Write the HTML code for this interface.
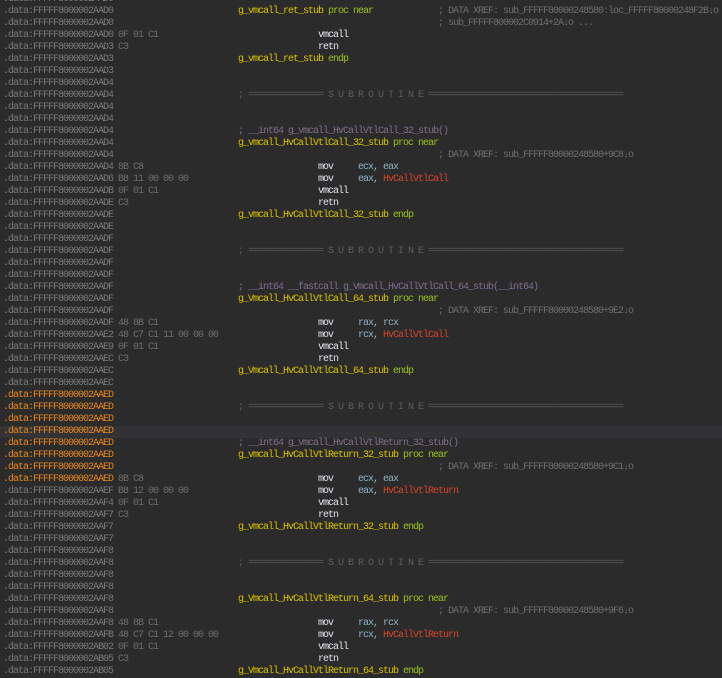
<!DOCTYPE html>
<html><head><meta charset="utf-8"><style>
html,body{margin:0;padding:0;background:#2b2b2b;width:722px;height:672px;overflow:hidden}
#w{position:absolute;top:-6px;left:0;width:722px}
.r{position:relative;height:12px;line-height:12px;font-family:"Liberation Mono",monospace;font-size:10px;letter-spacing:-1px;white-space:pre;color:#7c7c7c}
.r span{position:absolute;top:0}
.hl{background:#333335}
.a{left:3px;color:#7a7a7a}
.or .a{color:#e8871e}
.b{left:118px;color:#6e6e6e}
.l{left:238px;color:#d8c400}
.l i{font-style:normal;color:#98c31a}
.m{left:318px;color:#e4e6ee}
.o{left:358px;color:#8fb2c4}
.o i{font-style:normal;color:#d8452a}
.c{left:438px;color:#6f6f6f}
.s{left:238px;color:#5e5e62}
.f{left:238px;color:#7f6f8f}
</style></head><body><div id="w">
<div class="r"><span class="a">.data:FFFFF8000002AAD0</span></div>
<div class="r"><span class="a">.data:FFFFF8000002AAD0</span><span class="l">g_vmcall_ret_stub <i>proc near</i></span><span class="c">; DATA XREF: sub_FFFFF80000248580:loc_FFFFF80000248F2B↓o</span></div>
<div class="r"><span class="a">.data:FFFFF8000002AAD0</span><span class="c">; sub_FFFFF800002C0914+2A↓o ...</span></div>
<div class="r"><span class="a">.data:FFFFF8000002AAD0</span><span class="b">0F 01 C1</span><span class="m">vmcall</span></div>
<div class="r"><span class="a">.data:FFFFF8000002AAD3</span><span class="b">C3</span><span class="m">retn</span></div>
<div class="r"><span class="a">.data:FFFFF8000002AAD3</span><span class="l">g_vmcall_ret_stub <i>endp</i></span></div>
<div class="r"><span class="a">.data:FFFFF8000002AAD3</span></div>
<div class="r"><span class="a">.data:FFFFF8000002AAD4</span></div>
<div class="r"><span class="a">.data:FFFFF8000002AAD4</span><span class="s">; =============== S U B R O U T I N E =======================================</span></div>
<div class="r"><span class="a">.data:FFFFF8000002AAD4</span></div>
<div class="r"><span class="a">.data:FFFFF8000002AAD4</span></div>
<div class="r"><span class="a">.data:FFFFF8000002AAD4</span><span class="f">; __int64 g_vmcall_HvCallVtlCall_32_stub()</span></div>
<div class="r"><span class="a">.data:FFFFF8000002AAD4</span><span class="l">g_vmcall_HvCallVtlCall_32_stub <i>proc near</i></span></div>
<div class="r"><span class="a">.data:FFFFF8000002AAD4</span><span class="c">; DATA XREF: sub_FFFFF80000248580+9C8↓o</span></div>
<div class="r"><span class="a">.data:FFFFF8000002AAD4</span><span class="b">8B C8</span><span class="m">mov</span><span class="o">ecx, eax</span></div>
<div class="r"><span class="a">.data:FFFFF8000002AAD6</span><span class="b">B8 11 00 00 00</span><span class="m">mov</span><span class="o">eax, <i>HvCallVtlCall</i></span></div>
<div class="r"><span class="a">.data:FFFFF8000002AADB</span><span class="b">0F 01 C1</span><span class="m">vmcall</span></div>
<div class="r"><span class="a">.data:FFFFF8000002AADE</span><span class="b">C3</span><span class="m">retn</span></div>
<div class="r"><span class="a">.data:FFFFF8000002AADE</span><span class="l">g_vmcall_HvCallVtlCall_32_stub <i>endp</i></span></div>
<div class="r"><span class="a">.data:FFFFF8000002AADE</span></div>
<div class="r"><span class="a">.data:FFFFF8000002AADF</span></div>
<div class="r"><span class="a">.data:FFFFF8000002AADF</span><span class="s">; =============== S U B R O U T I N E =======================================</span></div>
<div class="r"><span class="a">.data:FFFFF8000002AADF</span></div>
<div class="r"><span class="a">.data:FFFFF8000002AADF</span></div>
<div class="r"><span class="a">.data:FFFFF8000002AADF</span><span class="f">; __int64 __fastcall g_Vmcall_HvCallVtlCall_64_stub(__int64)</span></div>
<div class="r"><span class="a">.data:FFFFF8000002AADF</span><span class="l">g_Vmcall_HvCallVtlCall_64_stub <i>proc near</i></span></div>
<div class="r"><span class="a">.data:FFFFF8000002AADF</span><span class="c">; DATA XREF: sub_FFFFF80000248580+9E2↓o</span></div>
<div class="r"><span class="a">.data:FFFFF8000002AADF</span><span class="b">48 8B C1</span><span class="m">mov</span><span class="o">rax, rcx</span></div>
<div class="r"><span class="a">.data:FFFFF8000002AAE2</span><span class="b">48 C7 C1 11 00 00 00</span><span class="m">mov</span><span class="o">rcx, <i>HvCallVtlCall</i></span></div>
<div class="r"><span class="a">.data:FFFFF8000002AAE9</span><span class="b">0F 01 C1</span><span class="m">vmcall</span></div>
<div class="r"><span class="a">.data:FFFFF8000002AAEC</span><span class="b">C3</span><span class="m">retn</span></div>
<div class="r"><span class="a">.data:FFFFF8000002AAEC</span><span class="l">g_Vmcall_HvCallVtlCall_64_stub <i>endp</i></span></div>
<div class="r"><span class="a">.data:FFFFF8000002AAEC</span></div>
<div class="r or"><span class="a">.data:FFFFF8000002AAED</span></div>
<div class="r or"><span class="a">.data:FFFFF8000002AAED</span><span class="s">; =============== S U B R O U T I N E =======================================</span></div>
<div class="r or"><span class="a">.data:FFFFF8000002AAED</span></div>
<div class="r or hl"><span class="a">.data:FFFFF8000002AAED</span></div>
<div class="r or"><span class="a">.data:FFFFF8000002AAED</span><span class="f">; __int64 g_vmcall_HvCallVtlReturn_32_stub()</span></div>
<div class="r or"><span class="a">.data:FFFFF8000002AAED</span><span class="l">g_vmcall_HvCallVtlReturn_32_stub <i>proc near</i></span></div>
<div class="r or"><span class="a">.data:FFFFF8000002AAED</span><span class="c">; DATA XREF: sub_FFFFF80000248580+9C1↓o</span></div>
<div class="r or"><span class="a">.data:FFFFF8000002AAED</span><span class="b">8B C8</span><span class="m">mov</span><span class="o">ecx, eax</span></div>
<div class="r"><span class="a">.data:FFFFF8000002AAEF</span><span class="b">B8 12 00 00 00</span><span class="m">mov</span><span class="o">eax, <i>HvCallVtlReturn</i></span></div>
<div class="r"><span class="a">.data:FFFFF8000002AAF4</span><span class="b">0F 01 C1</span><span class="m">vmcall</span></div>
<div class="r"><span class="a">.data:FFFFF8000002AAF7</span><span class="b">C3</span><span class="m">retn</span></div>
<div class="r"><span class="a">.data:FFFFF8000002AAF7</span><span class="l">g_vmcall_HvCallVtlReturn_32_stub <i>endp</i></span></div>
<div class="r"><span class="a">.data:FFFFF8000002AAF7</span></div>
<div class="r"><span class="a">.data:FFFFF8000002AAF8</span></div>
<div class="r"><span class="a">.data:FFFFF8000002AAF8</span><span class="s">; =============== S U B R O U T I N E =======================================</span></div>
<div class="r"><span class="a">.data:FFFFF8000002AAF8</span></div>
<div class="r"><span class="a">.data:FFFFF8000002AAF8</span></div>
<div class="r"><span class="a">.data:FFFFF8000002AAF8</span><span class="l">g_Vmcall_HvCallVtlReturn_64_stub <i>proc near</i></span></div>
<div class="r"><span class="a">.data:FFFFF8000002AAF8</span><span class="c">; DATA XREF: sub_FFFFF80000248580+9F6↓o</span></div>
<div class="r"><span class="a">.data:FFFFF8000002AAF8</span><span class="b">48 8B C1</span><span class="m">mov</span><span class="o">rax, rcx</span></div>
<div class="r"><span class="a">.data:FFFFF8000002AAFB</span><span class="b">48 C7 C1 12 00 00 00</span><span class="m">mov</span><span class="o">rcx, <i>HvCallVtlReturn</i></span></div>
<div class="r"><span class="a">.data:FFFFF8000002AB02</span><span class="b">0F 01 C1</span><span class="m">vmcall</span></div>
<div class="r"><span class="a">.data:FFFFF8000002AB05</span><span class="b">C3</span><span class="m">retn</span></div>
<div class="r"><span class="a">.data:FFFFF8000002AB05</span><span class="l">g_Vmcall_HvCallVtlReturn_64_stub <i>endp</i></span></div>
</div></body></html>
